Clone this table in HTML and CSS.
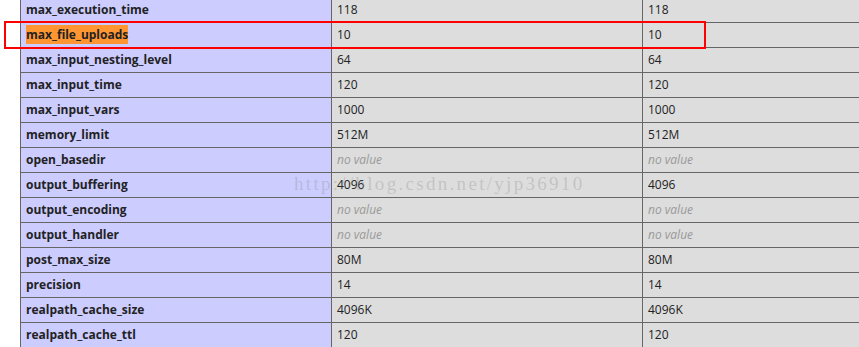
FILE: index.html
```html
<!DOCTYPE html>
<html>
<head>
<meta charset="utf-8">
<link rel="stylesheet" href="styles.css">
</head>
<body>
<div class="page">
<table class="info">
<tr><td class="e">max_execution_time</td><td class="v">118</td><td class="v">118</td></tr>
<tr><td class="e"><span class="hl">max_file_uploads</span></td><td class="v">10</td><td class="v">10</td></tr>
<tr><td class="e">max_input_nesting_level</td><td class="v">64</td><td class="v">64</td></tr>
<tr><td class="e">max_input_time</td><td class="v">120</td><td class="v">120</td></tr>
<tr><td class="e">max_input_vars</td><td class="v">1000</td><td class="v">1000</td></tr>
<tr><td class="e">memory_limit</td><td class="v">512M</td><td class="v">512M</td></tr>
<tr><td class="e">open_basedir</td><td class="v"><i>no value</i></td><td class="v"><i>no value</i></td></tr>
<tr><td class="e">output_buffering</td><td class="v">4096</td><td class="v">4096</td></tr>
<tr><td class="e">output_encoding</td><td class="v"><i>no value</i></td><td class="v"><i>no value</i></td></tr>
<tr><td class="e">output_handler</td><td class="v"><i>no value</i></td><td class="v"><i>no value</i></td></tr>
<tr><td class="e">post_max_size</td><td class="v">80M</td><td class="v">80M</td></tr>
<tr><td class="e">precision</td><td class="v">14</td><td class="v">14</td></tr>
<tr><td class="e">realpath_cache_size</td><td class="v">4096K</td><td class="v">4096K</td></tr>
<tr><td class="e">realpath_cache_ttl</td><td class="v">120</td><td class="v">120</td></tr>
</table>
<div class="mark-box"></div>
<div class="watermark">http://blog.csdn.net/yjp36910</div>
</div>
</body>
</html>
```

FILE: styles.css
```css
html, body {
  margin: 0;
  padding: 0;
  background: #fff;
  overflow: hidden;
}
.page {
  position: relative;
  width: 859px;
  height: 347px;
  overflow: hidden;
  font-family: "Open Sans", "Noto Sans", sans-serif;
  color: #222;
}
.info {
  border-collapse: collapse;
  width: 934px;
  margin: -3px 0 0 20px;
  table-layout: fixed;
}
.info td {
  border: 1px solid #666;
  font-size: 12px;
  line-height: 16px;
  height: 16px;
  padding: 4px 5px;
  vertical-align: baseline;
  white-space: nowrap;
}
.e {
  background: #ccf;
  width: 300px;
  font-weight: bold;
}
.v {
  background: #ddd;
  width: 300px;
}
.v i {
  color: #999;
}
.hl {
  background: #ff9632;
  padding: 1px 0;
}
.mark-box {
  position: absolute;
  left: 4px;
  top: 21px;
  width: 698px;
  height: 24px;
  border: 2px solid #f00;
}
.watermark {
  position: absolute;
  left: 294px;
  top: 172px;
  font-family: "Liberation Serif", serif;
  font-size: 19px;
  letter-spacing: 2.3px;
  line-height: 24px;
  color: rgba(140, 140, 140, 0.32);
  white-space: nowrap;
}
```
